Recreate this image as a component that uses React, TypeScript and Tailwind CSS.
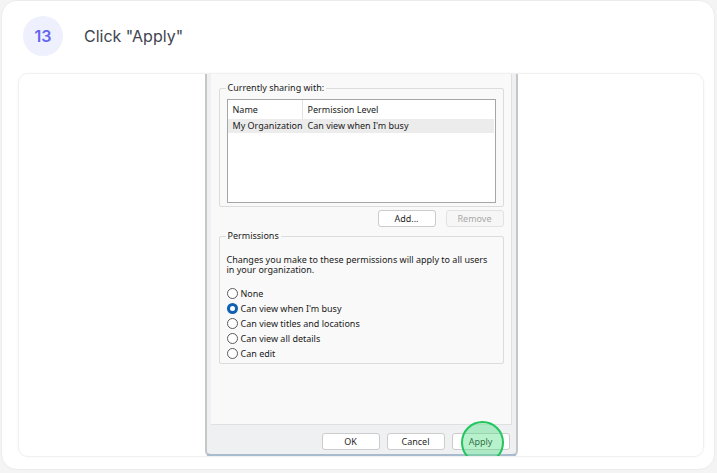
import React from "react";

const dlgFont = { fontFamily: '"Noto Sans", "Open Sans", sans-serif' };

function WinButton({ label, disabled }: { label: string; disabled?: boolean }) {
    return (
        <div
            className={
                "w-[58px] h-[17px] flex items-center justify-center rounded-[3px] border text-[9px] " +
                (disabled ? "border-[#e2e2e2] bg-[#f6f6f6] text-[#a8a8a8]" : "border-[#cccccc] bg-white text-[#1f1f1f]")
            }
        >
            {label}
        </div>
    );
}

function Radio({ label, checked }: { label: string; checked?: boolean }) {
    return (
        <div className="flex items-center gap-[3px] h-[15px]">
            {checked ? (
                <span className="w-[11px] h-[11px] rounded-full bg-[#0f5fb3] flex items-center justify-center">
                    <span className="w-[5px] h-[5px] rounded-full bg-white" />
                </span>
            ) : (
                <span className="w-[11px] h-[11px] rounded-full border border-[#5a5a5a] bg-white" />
            )}
            <span className="text-[9px] text-[#1a1a1a]">{label}</span>
        </div>
    );
}

function GroupBox({ title, children, className }: { title: string; children: React.ReactNode; className?: string }) {
    return (
        <div className={"relative border border-[#dcdcdc] rounded-[2px] " + (className ?? "")}>
            <span className="absolute -top-[7px] left-[6px] px-[2px] bg-[#f9f9f9] text-[9px] leading-[12px] text-[#1a1a1a]">
                {title}
            </span>
            {children}
        </div>
    );
}

function Dialog() {
    return (
        <div
            className="relative w-[313px] h-[383px] flex flex-col bg-[#eef0f2] border-x-2 border-b-[3px] border-x-[#c4c6c8] border-b-[#a9bccd] rounded-b-[6px]"
            style={dlgFont}
        >
            <div className="mx-[4px] h-[351px] bg-[#f9f9f9] border-r border-b border-[#e0e0e0] px-[8px] pt-[14px] flex flex-col">
                <GroupBox title="Currently sharing with:" className="w-[285px] h-[119px] pt-[10px] px-[7px]">
                    <div className="w-[269px] h-[104px] border border-[#a6a6a6] bg-white">
                        <div className="flex h-[19px] items-center text-[9px] text-[#1a1a1a]">
                            <span className="w-[75px] pl-[5px] border-r border-[#e2e2e2] h-full flex items-center">Name</span>
                            <span className="pl-[5px]">Permission Level</span>
                        </div>
                        <div className="flex h-[14px] items-center text-[9px] text-[#1a1a1a] bg-[#ececec] mr-[1px]">
                            <span className="w-[75px] pl-[5px] whitespace-nowrap">My Organization</span>
                            <span className="pl-[5px]">Can view when I'm busy</span>
                        </div>
                    </div>
                </GroupBox>
                <div className="flex justify-end gap-[10px] mt-[3px] w-[285px]">
                    <WinButton label="Add..." />
                    <WinButton label="Remove" disabled />
                </div>
                <GroupBox title="Permissions" className="w-[285px] h-[128px] mt-[9px] px-[7px] pt-[18px]">
                    <p className="text-[9px] leading-[10px] text-[#1a1a1a]">
                        Changes you make to these permissions will apply to all users in your organization.
                    </p>
                    <div className="mt-[11px] flex flex-col">
                        <Radio label="None" />
                        <Radio label="Can view when I'm busy" checked />
                        <Radio label="Can view titles and locations" />
                        <Radio label="Can view all details" />
                        <Radio label="Can edit" />
                    </div>
                </GroupBox>
            </div>
            <div className="flex justify-end gap-[7px] pr-[6px] pt-[8px]">
                <WinButton label="OK" />
                <WinButton label="Cancel" />
                <WinButton label="Apply" />
            </div>
            <div className="absolute left-[254px] top-[347px] w-[43px] h-[43px] rounded-full border-2 border-[#22c55e] bg-[#4ade80]/40" />
        </div>
    );
}

export default function App() {
    return (
        <div className="w-[717px] h-[473px] bg-[#f4f4f5] pl-[1px] pr-[2px] pb-[3px]">
            <div className="h-full bg-white rounded-[16px] border border-[#ececec] pl-[16px] pr-[10px] pt-[15px] flex flex-col">
                <div className="flex items-center gap-[21px] pl-[5px]">
                    <div className="w-[40px] h-[40px] rounded-full bg-[#eef0fd] flex items-center justify-center text-[16px] font-semibold text-[#6366f1]" style={{ fontFamily: "Inter, sans-serif" }}>
                        13
                    </div>
                    <span className="text-[16px] text-[#41454f]" style={{ fontFamily: "Inter, sans-serif" }}>
                        Click "Apply"
                    </span>
                </div>
                <div className="mt-[17px] h-[384px] rounded-[10px] border border-[#f0f0f0] shadow-[0_0_3px_rgba(0,0,0,0.04)] flex justify-center overflow-hidden">
                    <Dialog />
                </div>
            </div>
        </div>
    );
}
